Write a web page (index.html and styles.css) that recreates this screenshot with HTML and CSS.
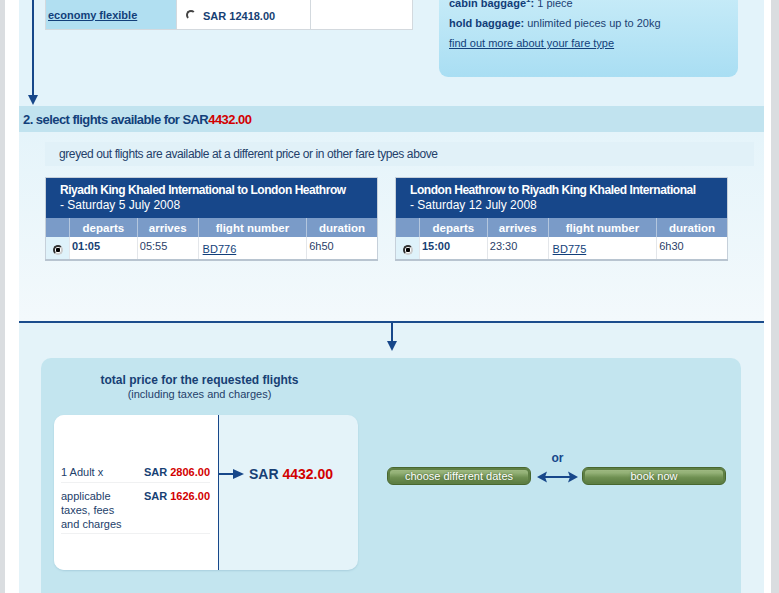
FILE: index.html
```html
<!DOCTYPE html>
<html lang="en">
<head>
    <meta charset="UTF-8">
    <meta name="viewport" content="width=device-width, initial-scale=1.0">
    <title>Seleccionar vuelos</title>
    <link rel="stylesheet" href="styles.css">
</head>
<body>
    <div class="marco">
        <div class="contenido">

            <div class="tarifas">
                <div class="flecha-bajada">
                    <div class="linea"></div>
                    <div class="punta"></div>
                </div>
                <table class="tabla-tarifa">
                    <tr>
                        <td class="tipo"><a href="#">economy flexible</a></td>
                        <td class="precio"><span class="radio"></span>SAR 12418.00</td>
                        <td class="vacio"></td>
                    </tr>
                </table>
                <div class="info-tarifa">
                    <p><b>cabin baggage<sup>1</sup>:</b> 1 piece</p>
                    <p><b>hold baggage:</b> unlimited pieces up to 20kg</p>
                    <p><a href="#">find out more about your fare type</a></p>
                </div>
            </div>

            <h2 class="titulo-seccion">2. select flights available for SAR<span class="rojo">4432.00</span></h2>

            <div class="vuelos">
                <div class="aviso">greyed out flights are available at a different price or in other fare types above</div>
                <div class="tablas">
                    <table class="tabla-vuelo">
                        <thead>
                            <tr>
                                <th colspan="5" class="ruta">
                                    <strong>Riyadh King Khaled International to London Heathrow</strong>
                                    <span>- Saturday 5 July 2008</span>
                                </th>
                            </tr>
                            <tr class="columnas">
                                <th class="col-radio"></th>
                                <th class="col-sale">departs</th>
                                <th class="col-llega">arrives</th>
                                <th class="col-numero">flight number</th>
                                <th class="col-dura">duration</th>
                            </tr>
                        </thead>
                        <tbody>
                            <tr>
                                <td class="col-radio"><span class="radio marcado"></span></td>
                                <td class="hora">01:05</td>
                                <td>05:55</td>
                                <td class="numero"><a href="#">BD776</a></td>
                                <td>6h50</td>
                            </tr>
                        </tbody>
                    </table>
                    <table class="tabla-vuelo">
                        <thead>
                            <tr>
                                <th colspan="5" class="ruta">
                                    <strong>London Heathrow to Riyadh King Khaled International</strong>
                                    <span>- Saturday 12 July 2008</span>
                                </th>
                            </tr>
                            <tr class="columnas">
                                <th class="col-radio"></th>
                                <th class="col-sale">departs</th>
                                <th class="col-llega">arrives</th>
                                <th class="col-numero">flight number</th>
                                <th class="col-dura">duration</th>
                            </tr>
                        </thead>
                        <tbody>
                            <tr>
                                <td class="col-radio"><span class="radio marcado"></span></td>
                                <td class="hora">15:00</td>
                                <td>23:30</td>
                                <td class="numero"><a href="#">BD775</a></td>
                                <td>6h30</td>
                            </tr>
                        </tbody>
                    </table>
                </div>
            </div>

            <div class="resumen">
                <div class="flecha-bajada flecha-centro">
                    <div class="linea"></div>
                    <div class="punta"></div>
                </div>
                <div class="panel">
                    <div class="total">
                        <h3>total price for the requested flights</h3>
                        <p class="sub">(including taxes and charges)</p>
                        <div class="caja">
                            <div class="desglose">
                                <div class="fila">
                                    <span>1 Adult x</span>
                                    <b><span class="azul">SAR</span> <span class="rojo">2806.00</span></b>
                                </div>
                                <div class="fila">
                                    <span>applicable<br>taxes, fees<br>and charges</span>
                                    <b><span class="azul">SAR</span> <span class="rojo">1626.00</span></b>
                                </div>
                            </div>
                            <div class="suma">
                                <div class="flecha-derecha">
                                    <div class="linea"></div>
                                    <div class="punta"></div>
                                </div>
                                <b class="gran-total"><span class="azul">SAR</span> <span class="rojo">4432.00</span></b>
                            </div>
                        </div>
                    </div>
                    <div class="acciones">
                        <button class="boton">choose different dates</button>
                        <div class="o">
                            <span>or</span>
                            <svg width="41" height="12" viewBox="0 0 41 12">
                                <path d="M4 6 H37" stroke="#17478a" stroke-width="2"/>
                                <path d="M0 6 L10 0.5 L8 6 L10 11.5 Z" fill="#17478a"/>
                                <path d="M41 6 L31 0.5 L33 6 L31 11.5 Z" fill="#17478a"/>
                            </svg>
                        </div>
                        <button class="boton">book now</button>
                    </div>
                </div>
            </div>

        </div>
    </div>
</body>
</html>
```

FILE: styles.css
```css
* {
    box-sizing: border-box;
    padding: 0;
    margin: 0;
}

body {
    background-color: #fff;
    font-family: "Liberation Sans", Arial, sans-serif;
    font-size: 11px;
    color: #23406a;
}

a {
    color: #123f7a;
}

.rojo {
    color: #d20000;
}

.azul {
    color: #173f74;
}

.marco {
    width: 779px;
    height: 593px;
    overflow: hidden;
    display: flex;
    border-left: 5px solid #dadde0;
    border-right: 8px solid #dadde0;
    padding-left: 14px;
    padding-right: 7px;
}

.contenido {
    width: 745px;
    background-color: #e4f3f9;
}

/* flechas */
.flecha-bajada {
    width: 10px;
    display: flex;
    flex-direction: column;
    align-items: center;
}

.flecha-bajada .linea {
    flex: 1;
    width: 2px;
    background-color: #17478a;
}

.flecha-bajada .punta {
    width: 0;
    border-left: 5px solid transparent;
    border-right: 5px solid transparent;
    border-top: 10px solid #17478a;
}

.flecha-derecha {
    display: flex;
    align-items: center;
    width: 25px;
}

.flecha-derecha .linea {
    flex: 1;
    height: 2px;
    background-color: #17478a;
}

.flecha-derecha .punta {
    width: 0;
    border-top: 5px solid transparent;
    border-bottom: 5px solid transparent;
    border-left: 11px solid #17478a;
}

/* radios */
.radio {
    display: inline-block;
    width: 10px;
    height: 10px;
    border-radius: 50%;
    border: 2px solid;
    border-color: #444 #fff #fff #444;
    vertical-align: middle;
}

.radio.marcado {
    border-color: #333 #ccc #ccc #333;
    background: radial-gradient(circle, #000 0, #000 2px, #fff 2.5px);
}

/* seccion 1 */
.tarifas {
    display: flex;
    height: 106px;
    overflow: hidden;
    background-color: #e3f3fa;
}

.tarifas .flecha-bajada {
    margin-left: 9px;
    margin-bottom: 1px;
}

.tabla-tarifa {
    margin-left: 7px;
    margin-top: -1px;
    align-self: flex-start;
    border-collapse: collapse;
    width: 368px;
}

.tabla-tarifa td {
    border: 1px solid #d3d9de;
    height: 30px;
    background-color: #fff;
}

.tabla-tarifa .tipo {
    width: 131px;
    background-color: #b1dff1;
    padding-left: 2px;
}

.tabla-tarifa .tipo a {
    font-weight: bold;
}

.tabla-tarifa .precio {
    width: 134px;
    padding-left: 9px;
    padding-top: 2px;
    font-weight: bold;
    color: #173f74;
}

.tabla-tarifa .precio .radio {
    margin-right: 7px;
    margin-top: -4px;
}

.info-tarifa {
    margin-left: 26px;
    margin-top: -24px;
    width: 299px;
    align-self: flex-start;
    padding: 17px 10px 24px;
    border-radius: 0 0 9px 9px;
    background: linear-gradient(#cdeef9, #a9def3);
    line-height: 20px;
    color: #1b3f73;
}

.info-tarifa b {
    color: #123d78;
}

.info-tarifa sup {
    font-size: 8px;
    line-height: 0;
}

/* seccion 2 */
.titulo-seccion {
    height: 26px;
    line-height: 27px;
    padding-left: 4px;
    background-color: #c1e3ef;
    font-size: 13px;
    letter-spacing: -0.55px;
    color: #123f7a;
}

.vuelos {
    height: 191px;
    padding-top: 10px;
    background: linear-gradient(#e5f4fa, #f3f9fc);
    border-bottom: 2px solid #1b4c8c;
}

.aviso {
    margin: 0 10px 0 26px;
    height: 24px;
    line-height: 24px;
    padding-left: 14px;
    background-color: #e1f1f8;
    font-size: 12px;
    letter-spacing: -0.4px;
    color: #23406a;
}

.tablas {
    display: flex;
    gap: 17px;
    margin-left: 26px;
    margin-top: 11px;
}

.tabla-vuelo {
    width: 333px;
    border-collapse: collapse;
    border: 1px solid #c6d0da;
    border-bottom: 2px solid #b8c4d0;
}

.tabla-vuelo .ruta {
    background-color: #17478a;
    color: #fff;
    text-align: left;
    padding: 5px 14px 5px;
    font-size: 12px;
    line-height: 15px;
    white-space: nowrap;
}

.tabla-vuelo .ruta strong {
    letter-spacing: -0.45px;
}

.tabla-vuelo .ruta span {
    display: block;
    font-weight: normal;
}

.columnas th {
    height: 19px;
    background-color: #7a9bc8;
    color: #fff;
    font-size: 11.5px;
    border-left: 1px solid #b3c6de;
}

.columnas th:first-child {
    border-left: none;
}

.col-radio { width: 24px; }
.col-sale { width: 68px; }
.col-llega { width: 61px; }
.col-numero { width: 109px; }
.col-dura { width: 71px; }

.tabla-vuelo td {
    height: 23px;
    background-color: #fff;
    vertical-align: top;
    padding: 3px 2px 0;
    border-left: 1px solid #e3e6ea;
    color: #2a4068;
}

.tabla-vuelo td.col-radio {
    background-color: #dff2fa;
    border-left: none;
    padding: 6px 0 0 7px;
}

.tabla-vuelo td.hora {
    font-weight: bold;
    color: #173f74;
}

.tabla-vuelo td.numero {
    padding: 6px 0 0 4px;
}

/* seccion 3 */
.resumen {
    display: flex;
    flex-direction: column;
    height: 270px;
}

.flecha-centro {
    align-self: center;
    height: 28px;
}

.panel {
    display: flex;
    margin: 7px 23px 0 22px;
    flex: 1;
    background-color: #c3e5ef;
    border-radius: 10px 10px 0 0;
}

.total {
    width: 317px;
    padding-top: 15px;
}

.total h3 {
    text-align: center;
    font-size: 12px;
    line-height: 14px;
    color: #173f74;
}

.total .sub {
    text-align: center;
    line-height: 14px;
    color: #23406a;
}

.caja {
    display: flex;
    margin: 14px 0 0 13px;
    width: 304px;
    height: 155px;
    border-radius: 10px;
    overflow: hidden;
    background-color: #e4f3f9;
    box-shadow: 0 1px 2px #a9cfdd;
}

.desglose {
    width: 165px;
    padding: 47px 8px 0 7px;
    background-color: #fff;
    border-right: 1px solid #17478a;
}

.fila {
    display: flex;
    justify-content: space-between;
    line-height: 14px;
    padding: 3px 0;
    border-bottom: 1px solid #f0f1f2;
}

.fila + .fila {
    padding: 6px 0 2px;
}

.suma {
    width: 139px;
    display: flex;
    align-items: center;
    align-self: flex-start;
    margin-top: 51px;
}

.gran-total {
    margin-left: 5px;
    font-size: 14px;
}

.acciones {
    display: flex;
    align-items: flex-start;
    margin-left: 29px;
    padding-top: 93px;
}

.boton {
    width: 144px;
    height: 18px;
    margin-top: 16px;
    border-radius: 6px;
    border: 1px solid #48672f;
    background: linear-gradient(#7f9f62 0%, #93b176 30%, #6e8f51 60%, #5a7b40 100%);
    box-shadow: inset 0 0 0 2px #5e7f44, inset 0 3px 3px #a7c08b;
    color: #fff;
    font-family: "Liberation Sans", Arial, sans-serif;
    font-size: 11px;
    text-shadow: 0 0 2px #3f5e2b;
    cursor: pointer;
}

.o {
    display: flex;
    flex-direction: column;
    align-items: center;
    width: 41px;
    margin: 0 4px 0 6px;
    font-size: 12px;
    font-weight: bold;
    line-height: 14px;
    color: #17478a;
}

.o svg {
    margin-top: 6px;
}
```
